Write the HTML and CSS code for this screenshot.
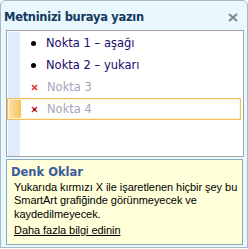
FILE: index.html
```html
<!DOCTYPE html>
<html>
<head>
<meta charset="utf-8">
<link rel="stylesheet" href="styles.css">
</head>
<body>
<div class="window">
  <div class="titlebar">
    <span class="title">Metninizi buraya yazın</span>
    <svg class="close" width="10" height="9" viewBox="0 0 10 9"><path d="M1 1 L9 8 M9 1 L1 8" stroke="#7f8a93" stroke-width="2.2" fill="none"/></svg>
  </div>
  <div class="list">
    <div class="row">
      <span class="gutter"></span>
      <span class="marker"><span class="dot"></span></span>
      <span class="text">Nokta 1 – aşağı</span>
    </div>
    <div class="row">
      <span class="gutter"></span>
      <span class="marker"><span class="dot"></span></span>
      <span class="text">Nokta 2 – yukarı</span>
    </div>
    <div class="row muted">
      <span class="gutter"></span>
      <span class="marker"><svg width="7" height="7" viewBox="0 0 7 7"><path d="M1 1 L6 6 M6 1 L1 6" stroke="#e0303a" stroke-width="1.6"/></svg></span>
      <span class="text">Nokta 3</span>
    </div>
    <div class="row muted selected">
      <span class="gutter"></span>
      <span class="marker"><svg width="7" height="7" viewBox="0 0 7 7"><path d="M1 1 L6 6 M6 1 L1 6" stroke="#e0303a" stroke-width="1.6"/><rect x="2.5" y="2.5" width="2" height="2" fill="#401010"/></svg></span>
      <span class="text">Nokta 4</span>
    </div>
    <div class="rest"><span class="gutter"></span></div>
  </div>
  <div class="info">
    <div class="info-title">Denk Oklar</div>
    <p class="info-text">Yukarıda kırmızı X ile işaretlenen hiçbir şey bu SmartArt grafiğinde görünmeyecek ve kaydedilmeyecek.</p>
    <a class="info-link" href="#">Daha fazla bilgi edinin</a>
  </div>
</div>
</body>
</html>
```

FILE: styles.css
```css
html, body {
  margin: 0;
  padding: 0;
  background: #ffffff;
}
body {
  font-family: "DejaVu Sans", "Liberation Sans", sans-serif;
}
.window {
  box-sizing: border-box;
  width: 248px;
  height: 248px;
  border: 1px solid #a6bac7;
  border-radius: 5px 5px 0 0;
  background: #e8f8fc;
  display: flex;
  flex-direction: column;
  box-shadow: 0 1px 0 #9aa4aa;
}
.titlebar {
  height: 29px;
  display: flex;
  align-items: center;
  justify-content: space-between;
  padding: 0 9px 0 3px;
}
.title {
  font-family: "DejaVu Sans", sans-serif;
  font-weight: bold;
  font-size: 11.5px;
  color: #15385e;
  letter-spacing: -0.3px;
  padding-top: 2px;
}
.close {
  margin-top: 3px;
}
.list {
  margin: 0 3px 0 5px;
  height: 127px;
  box-sizing: border-box;
  border: 1px solid #a3a3a3;
  background: #ffffff;
  padding: 1px 0 0 1px;
  display: flex;
  flex-direction: column;
}
.row {
  height: 22px;
  display: flex;
  align-items: center;
  box-sizing: border-box;
  font-family: "DejaVu Sans", sans-serif;
  font-size: 11.5px;
  color: #20086a;
  margin-right: 1px;
}
.gutter {
  width: 12px;
  align-self: stretch;
  background: #e2ebfb;
  flex: none;
}
.marker {
  width: 26px;
  display: flex;
  justify-content: center;
  align-items: center;
  flex: none;
}
.dot {
  width: 5px;
  height: 5px;
  border-radius: 50%;
  background: #000;
}
.muted {
  color: #aaa3b8;
}
.selected {
  border: 1px solid #f5ba5a;
  box-shadow: inset 0 0 0 1px #fff3d8;
  margin-left: -1px;
  margin-right: 2px;
}
.selected .gutter {
  background: linear-gradient(to right, #fbe2a8, #f7c25a);
  width: 12px;
  margin: 1px 0 1px 1px;
}
.selected .marker {
  width: 25px;
}
.muted .marker {
  padding-left: 1px;
}
.rest {
  flex: 1;
  display: flex;
}
.info {
  margin: 2px 4px 0 5px;
  height: 86px;
  box-sizing: border-box;
  border: 1px solid #8ea8bd;
  background: #ffffda;
  padding: 6px 0 0 4px;
  font-family: "Liberation Sans", Arial, sans-serif;
  font-size: 11px;
  letter-spacing: -0.05px;
  line-height: 13.5px;
  color: #000;
}
.info-title {
  font-family: "DejaVu Sans", sans-serif;
  font-weight: bold;
  color: #3a5c9c;
  font-size: 11.5px;
  letter-spacing: 0;
  margin-bottom: 1px;
}
.info-text {
  margin: 0 0 3px 3px;
}
.info-link {
  display: inline-block;
  margin-left: 3px;
  color: #000;
  text-decoration: underline;
}
```
